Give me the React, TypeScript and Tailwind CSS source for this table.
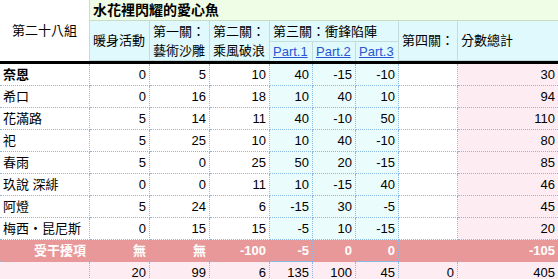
import React from "react";

const font = { fontFamily: '"Liberation Sans", "Noto Sans CJK TC", Arial, sans-serif' };

type Row = { name: string; bold?: boolean; v: (string | number)[] };

const rows: Row[] = [
  { name: "奈恩", bold: true, v: [0, 5, 10, 40, -15, -10, "", 30] },
  { name: "希口", v: [0, 16, 18, 10, 40, 10, "", 94] },
  { name: "花滿路", v: [5, 14, 11, 40, -10, 50, "", 110] },
  { name: "祀", v: [5, 25, 10, 10, 40, -10, "", 80] },
  { name: "春雨", v: [5, 0, 25, 50, 20, -15, "", 85] },
  { name: "玖說 深緋", v: [0, 0, 11, 10, -15, 40, "", 46] },
  { name: "阿燈", v: [5, 24, 6, -15, 30, -5, "", 45] },
  { name: "梅西・昆尼斯", v: [0, 15, 15, -5, 10, -15, "", 20] },
];

const dataBg = [
  "bg-white",
  "bg-white",
  "bg-white",
  "bg-[#ebfcfc]",
  "bg-[#ebfcfc]",
  "bg-[#ebfcfc]",
  "bg-white",
  "bg-[#fdedf2]",
];

const dcell =
  "flex items-center border-r border-b border-dotted border-[#8cb8e4] px-[3px] leading-none whitespace-nowrap overflow-hidden";
const hcell =
  "flex items-center border-r border-b border-[#c5dcdc] bg-[#e0f9fc] px-[3px] leading-[19px] whitespace-nowrap";

export default function App() {
  return (
    <div className="w-[558px] h-[279px] overflow-hidden bg-white text-[13px] text-black" style={font}>
      <div className="grid grid-cols-[90px_60px_60px_60px_43px_43px_43px_59px_100px] grid-rows-[21px_21px_19px_3px_repeat(10,22px)]">
        {/* header */}
        <div className="row-span-3 flex items-center justify-center border-r border-[#c5dcdc] bg-white">第二十八組</div>
        <div className="col-span-8 flex items-center border-b border-[#c8dcc4] bg-[#f0fde6] px-[3px] text-[14px] font-bold">
          水花裡閃耀的愛心魚
        </div>
        <div className={`${hcell} row-span-2`}>暖身活動</div>
        <div className={`${hcell} row-span-2`}>
          <span>
            第一關：
            <br />
            藝術沙雕
          </span>
        </div>
        <div className={`${hcell} row-span-2`}>
          <span>
            第二關：
            <br />
            乘風破浪
          </span>
        </div>
        <div className={`${hcell} col-span-3`}>第三關：衝鋒陷陣</div>
        <div className={`${hcell} row-span-2`}>第四關：</div>
        <div className={`${hcell} row-span-2 border-r-0`}>分數總計</div>
        {["Part.1", "Part.2", "Part.3"].map((p) => (
          <div key={p} className={`${hcell} border-b-0`}>
            <span className="text-[#2a55d6] underline">{p}</span>
          </div>
        ))}
        <div className="col-span-9 bg-black" />

        {/* data */}
        {rows.map((r) => (
          <React.Fragment key={r.name}>
            <div className={`${dcell} bg-white ${r.bold ? "font-bold" : ""}`}>{r.name}</div>
            {r.v.map((x, i) => (
              <div key={i} className={`${dcell} ${dataBg[i]} justify-end ${i === 7 ? "border-r-0" : ""}`}>
                {x}
              </div>
            ))}
          </React.Fragment>
        ))}

        {/* interference */}
        <div className={`${dcell} bg-[#e89898] justify-end font-bold text-white`}>受干擾項</div>
        {["無", "無", -100, -5, 0, 0, "", -105].map((x, i) => (
          <div
            key={i}
            className={`${dcell} bg-[#e89898] justify-end font-bold text-white ${i === 7 ? "border-r-0" : ""}`}
          >
            {x}
          </div>
        ))}

        {/* total */}
        <div className={`${dcell} bg-[#fdedf2]`} />
        {[20, 99, 6, 135, 100, 45, 0, 405].map((x, i) => (
          <div key={i} className={`${dcell} bg-[#fdedf2] justify-end ${i === 7 ? "border-r-0" : ""}`}>
            {x}
          </div>
        ))}
      </div>
    </div>
  );
}
